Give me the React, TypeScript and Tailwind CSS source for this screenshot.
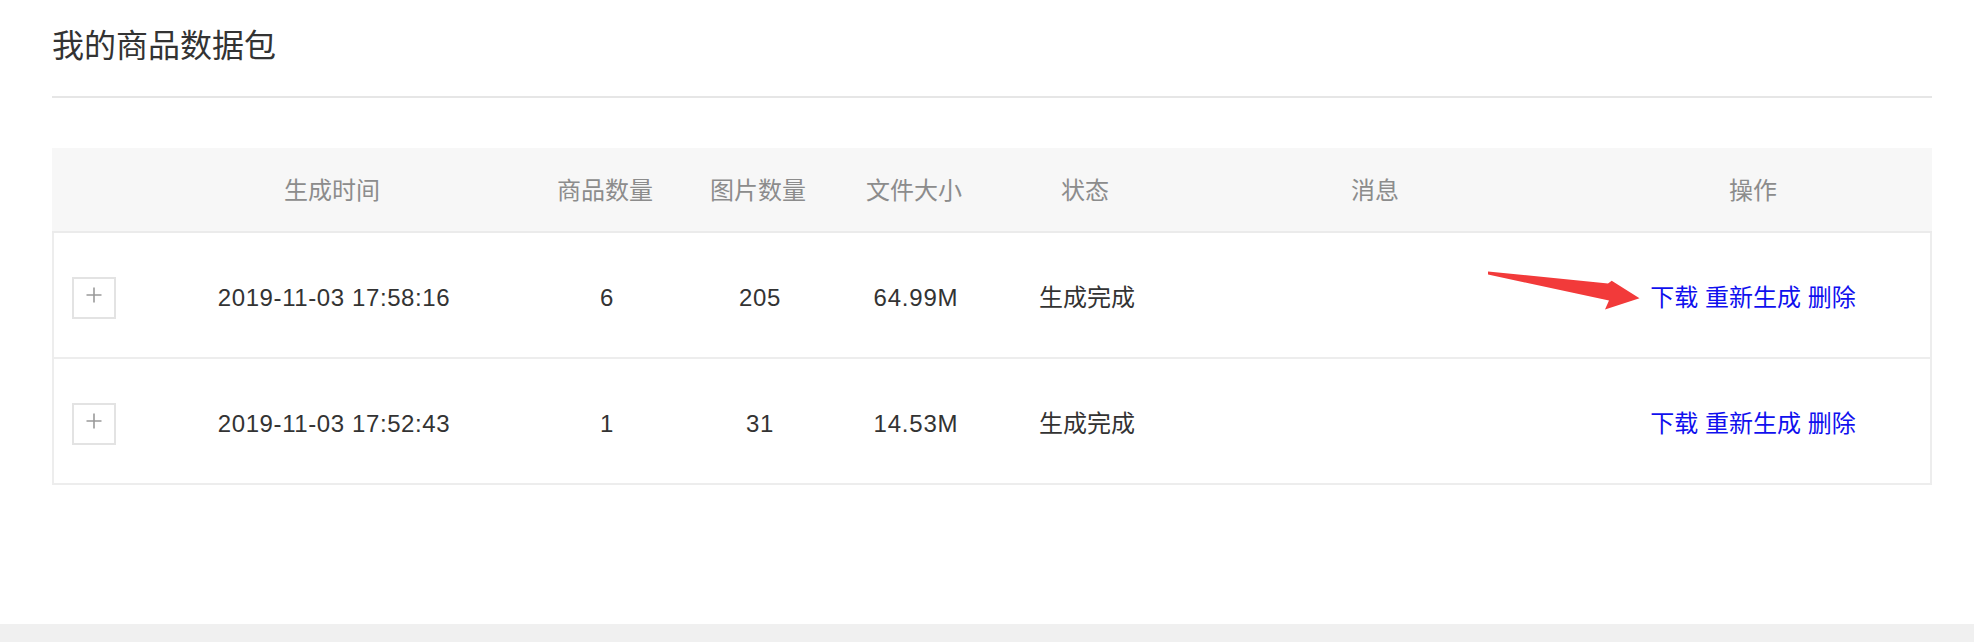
import React from "react";

const FONT = '"Liberation Sans", "Noto Sans CJK SC", sans-serif';

const rows = [
  { time: "2019-11-03 17:58:16", qty: "6", imgs: "205", size: "64.99M", status: "生成完成" },
  { time: "2019-11-03 17:52:43", qty: "1", imgs: "31", size: "14.53M", status: "生成完成" },
];

const COLS = "grid grid-cols-[84px_392px_154px_152px_160px_182px_398px_1fr]";

function PlusBox() {
  return (
    <div className="w-[44px] h-[42px] border-2 border-[#e3e3e3] flex items-center justify-center">
      <svg width="18" height="18" viewBox="0 0 18 18" className="mb-[6px]">
        <path d="M9 1.5V16.5M1.5 9H16.5" stroke="#9a9a9a" strokeWidth="1.6" fill="none" />
      </svg>
    </div>
  );
}

export default function App() {
  return (
    <div className="relative w-[1974px] h-[642px] bg-white flex flex-col" style={{ fontFamily: FONT }}>
      <div className="flex-1 pl-[52px] pr-[42px]">
        <div className="h-[98px] border-b-2 border-[#e6e6e6] pt-[26px]">
          <h1 className="text-[32px] leading-[40px] text-[#333]">我的商品数据包</h1>
        </div>
        <div className="mt-[50px]">
          <div className={`${COLS} h-[85px] pt-[2px] bg-[#f7f7f7] border-b-2 border-[#ebebeb] text-[24px] text-[#8c8c8c] items-center text-center`}>
            <div></div>
            <div>生成时间</div>
            <div>商品数量</div>
            <div>图片数量</div>
            <div>文件大小</div>
            <div>状态</div>
            <div>消息</div>
            <div>操作</div>
          </div>
          <div className="border-x-2 border-[#ededed]">
            {rows.map((r, i) => (
              <div
                key={i}
                className={`${COLS} h-[126px] pt-[5px] border-b-2 border-[#ededed] text-[24px] text-[#333] items-center text-center`}
              >
                <div className="flex items-center pl-[18px]">
                  <PlusBox />
                </div>
                <div className="tracking-[0.6px]">{r.time}</div>
                <div className="tracking-[0.6px]">{r.qty}</div>
                <div className="tracking-[0.6px]">{r.imgs}</div>
                <div className="tracking-[0.8px]">{r.size}</div>
                <div>{r.status}</div>
                <div></div>
                <div className="text-[#1010ee]">
                  <span>下载</span> <span>重新生成</span> <span>删除</span>
                </div>
              </div>
            ))}
          </div>
        </div>
      </div>
      <div className="h-[18px] bg-[#f0f0f0]"></div>

      <svg
        className="absolute left-[1480px] top-[265px]"
        width="170"
        height="50"
        viewBox="0 0 170 50"
      >
        <polygon
          points="8,6.5 128,18.5 131.7,15.7 159.5,33.3 125,44.5 129,35.5 8,9.5"
          fill="#f23a3a"
        />
      </svg>
    </div>
  );
}
